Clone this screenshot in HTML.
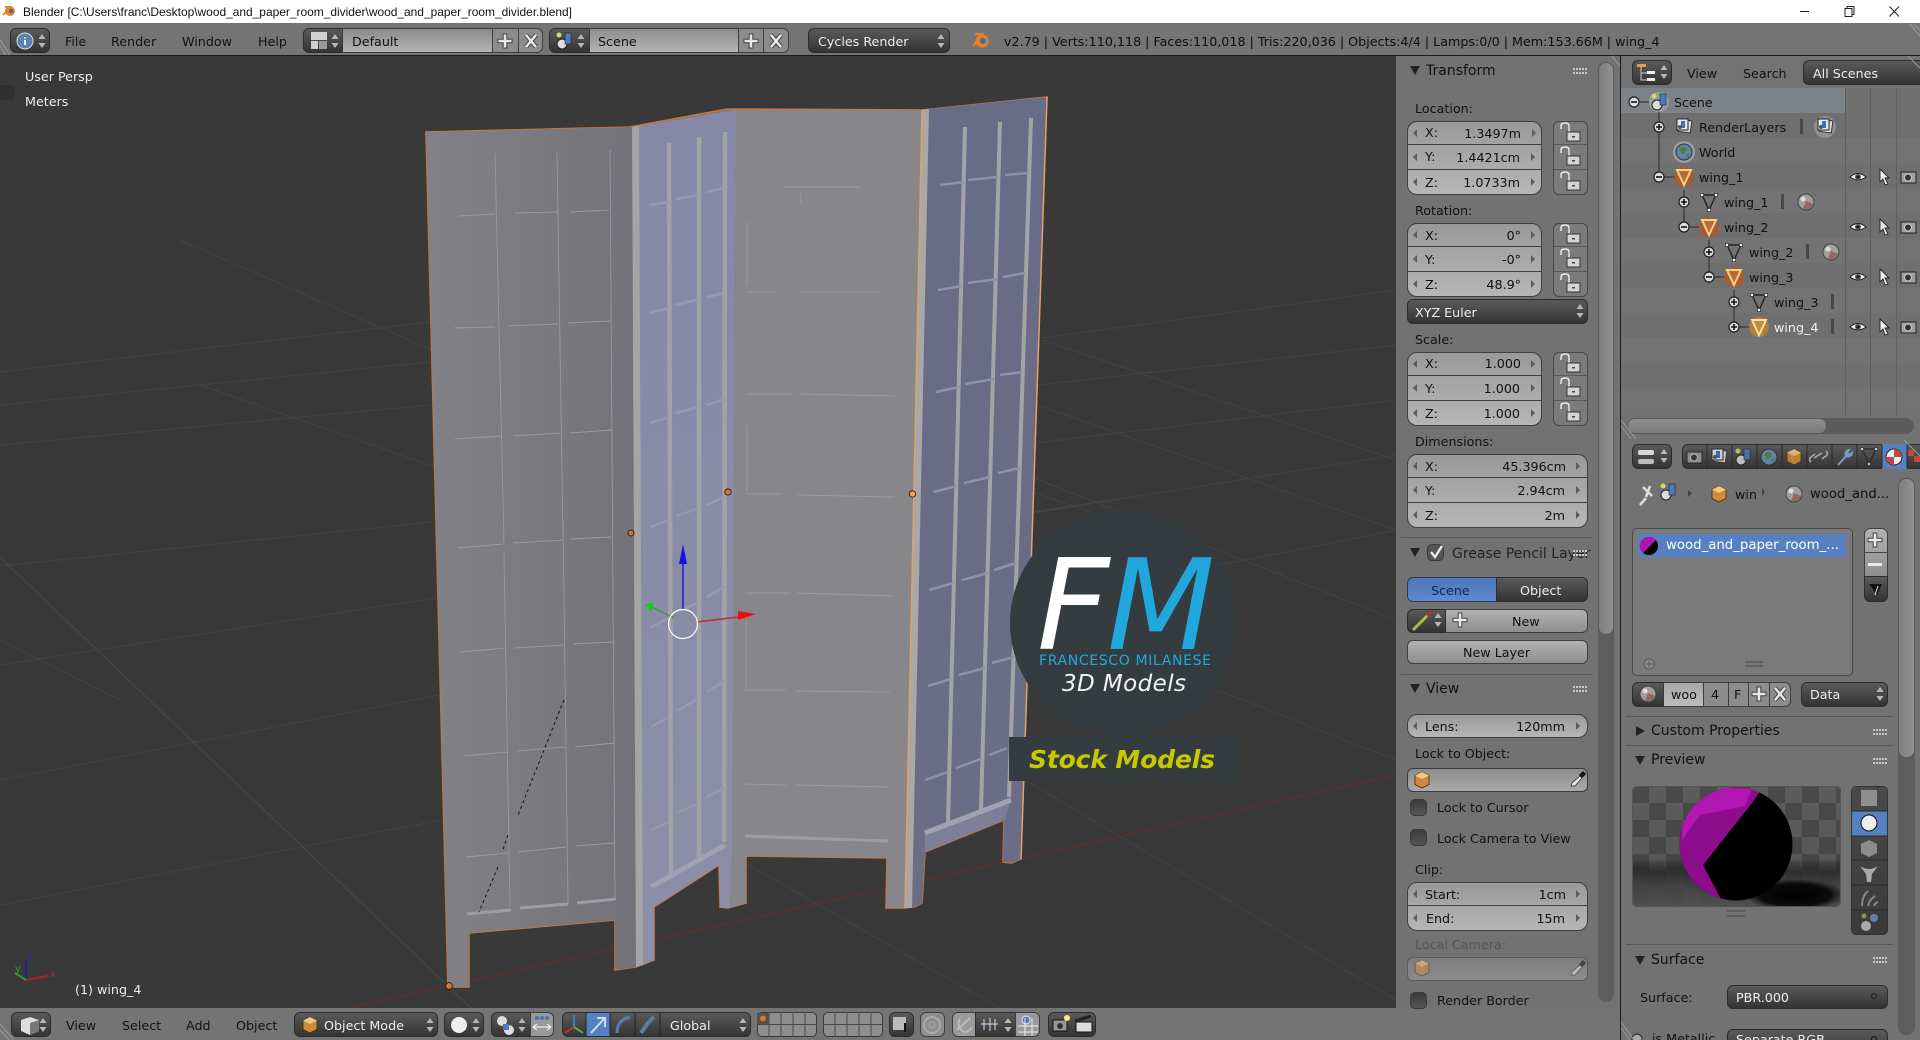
<!DOCTYPE html>
<html><head><meta charset="utf-8"><title>Blender</title>
<style>
html,body{margin:0;padding:0;background:#737373;}
#p{position:relative;width:1920px;height:1040px;overflow:hidden;background:#737373;font-family:"DejaVu Sans","Liberation Sans",sans-serif;font-size:12.7px;color:#111;}
#p div,#p span,#p svg{position:absolute;box-sizing:border-box;}
.t{white-space:nowrap;line-height:16px;height:16px;}
.w{color:#eee;}
.h{font-size:14px;color:#111;}
.dk{background:linear-gradient(#5a5a5a,#343434);border:1px solid #2c2c2c;border-radius:6px;}
.fl{background:linear-gradient(#8e8e8e,#b4b4b4);border:1px solid #3a3a3a;}
.bt{background:linear-gradient(#b2b2b2,#8e8e8e);border:1px solid #3e3e3e;border-radius:6px;}
.grp{background:linear-gradient(#999,#b6b6b6);border:1px solid #3f3f3f;border-radius:10px;}
.sep{background:#5a5a5a;height:1px;}
.lk{background:#7b7b7b;border:1px solid #474747;}
.cb{background:linear-gradient(#3c3c3c,#555);border:1px solid #3a3a3a;border-radius:5px;width:17px;height:17px;}
</style></head><body><div id="p">

<div style="left:0;top:0;width:1920px;height:23px;background:#fff"></div>
<div style="left:0;top:23px;width:1920px;height:32px;background:#747474"></div>
<div style="left:0;top:55px;width:1920px;height:1px;background:#1c1c1c"></div>
<div style="left:0;top:56px;width:1396px;height:952px;background:#393939"></div>
<div style="left:1396px;top:56px;width:224px;height:952px;background:#727272"></div>
<div style="left:0;top:1008px;width:1620px;height:32px;background:#747474"></div>
<div style="left:1620px;top:56px;width:1px;height:984px;background:#1a1a1a"></div>
<div style="left:1621px;top:439px;width:299px;height:1px;background:#1a1a1a"></div>
<div style="left:1621px;top:56px;width:299px;height:32px;background:#737373"></div>
<div style="left:1621px;top:88px;width:299px;height:352px;background:#6f6f6f"></div>
<div style="left:1621px;top:138px;width:299px;height:25px;background:#737373"></div>
<div style="left:1621px;top:188px;width:299px;height:25px;background:#737373"></div>
<div style="left:1621px;top:238px;width:299px;height:25px;background:#737373"></div>
<div style="left:1621px;top:288px;width:299px;height:25px;background:#737373"></div>
<div style="left:1621px;top:338px;width:299px;height:25px;background:#737373"></div>
<div style="left:1621px;top:388px;width:299px;height:27px;background:#737373"></div>
<div style="left:1621px;top:88px;width:224px;height:25px;background:#7c8285"></div>
<div style="left:1845px;top:88px;width:1px;height:327px;background:#5f5f5f"></div>
<div style="left:1870px;top:88px;width:1px;height:327px;background:#5f5f5f"></div>
<div style="left:1896px;top:88px;width:1px;height:327px;background:#5f5f5f"></div>
<div style="left:1621px;top:415px;width:299px;height:24px;background:#727272"></div>
<div style="left:1621px;top:440px;width:299px;height:600px;background:#727272"></div>

<!-- viewport art -->
<svg style="left:0;top:56px" width="1396" height="952" viewBox="0 56 1396 952">
<defs>
<linearGradient id="gl" x1="0" x2="1" y1="0" y2="0"><stop offset="0" stop-color="#828286"/><stop offset="1" stop-color="#727278"/></linearGradient>
<linearGradient id="gm" x1="0" x2="0" y1="0" y2="1"><stop offset="0" stop-color="#87878a"/><stop offset="1" stop-color="#87878b"/></linearGradient>
<linearGradient id="gb" x1="0" x2="0" y1="0" y2="1"><stop offset="0" stop-color="#8589a6"/><stop offset="1" stop-color="#8d8fa8"/></linearGradient>
<linearGradient id="gr" x1="0" x2="0" y1="0" y2="1"><stop offset="0" stop-color="#696c86"/><stop offset="1" stop-color="#6b6d86"/></linearGradient>
</defs>
<g stroke="#444" stroke-width="1" fill="none">
<path d="M0,372 L430,322 M0,405 L430,362 M0,445 L430,405 M0,566 L432,522 M0,665 L435,598 M0,780 L439,695 M0,905 L441,820"/>
<path d="M180,240 L432,350 M200,385 L435,467 M0,640 L120,700"/>
<path d="M1042,338 L1396,290 M1037,385 L1396,345 M1035,443 L1396,400 M1033,513 L1396,455 M1042,340 L1396,460 M1037,405 L1396,530 M1034,478 L1396,620 M1025,780 L1396,1000 M740,860 L1000,1008 M1035,493 L1093,513 M1033,512 L1177,490 M1220,565 L1396,530 M1217,690 L1396,760"/>
</g>
<path d="M349,1008 L1396,775" stroke="#6c2b2b" stroke-width="1.2" fill="none"/>
<path d="M0,557 L471,1008" stroke="#3a543a" stroke-width="1" fill="none"/>

<path d="M426,132 L630,127 L727,109 L922,110 L1047,97 L1021,859 L1011,863 L1003,862 L1004,820 L925,852 L922,903 L914,907 L905,908 L886,908 L887,858 L746,856 L746,903 L728,908 L720,907 L719,865 L654,907 L654,960 L636,967 L615,970 L615,920 L469,933 L469,987 L448,987 Z" fill="#7b7b80" stroke="#c9763c" stroke-width="1.6"/>
<polygon points="426,132 632,127 636,967 615,970 615,920 469,933 469,987 448,987" fill="url(#gl)"/>
<polygon points="639,126 736,110 732,853 730,908 720,907 719,865 654,907 654,960 643,965" fill="url(#gb)"/>
<polygon points="736,110 922,110 905,908 886,908 887,858 746,856 746,903 730,908 732,853" fill="url(#gm)"/>
<polygon points="929,109 1047,97 1021,859 1011,863 1003,862 1004,820 925,852 922,903 914,907 912,908" fill="url(#gr)"/>
<polygon points="632,127 639,126 643,965 636,967" fill="#a5a5a5"/>
<polygon points="922,110 929,109 912,908 905,908" fill="#a8a8a8"/>
<polygon points="925,835 1011,798 1005,820 925,852" fill="#7d7f97"/>
<!-- bars -->
<g fill="none" stroke="#a3a3a6" stroke-width="4.5">
<path d="M669,143 L671,875 M699,137 L699,857 M725,132 L724,842"/>
<path d="M965,127 L948,823 M1000,122 L981,810 M1031,118 L1009,797" stroke-width="4"/>
<path d="M651,887 L725,845 M925,833 L1011,800" stroke="#a0a2b0" stroke-width="5"/>
</g>
<g fill="none" stroke="#9799ae" stroke-width="2.5">
<path d="M649,205L669,202M676,199L699,195M707,192L724,188M650,313L669,308M676,305L699,299M707,297L724,293M650,423L669,417M676,413L699,407M707,405L724,399M651,527L669,520M677,516L699,508M707,505L724,497M651,627L669,618M677,612L699,602M707,597L724,587M651,727L669,717M677,711L699,698M707,692L724,681M651,830L669,822M677,813L699,803M707,797L724,788"/>
<path d="M940,185L964,182M968,180L998,177M1005,175L1029,173M938,290L962,286M968,283L997,279M1003,277L1025,273M936,392L959,387M965,384L994,379M1000,375L1022,372M933,492L957,486M964,483L990,477M998,473L1020,468M929,590L953,583M962,580L988,573M994,570L1016,563M928,686L951,679M959,675L985,668M992,663L1014,657M925,780L948,772M956,768L981,759M989,755L1007,748" stroke="#8f91a8"/>
</g>
<!-- thin lines -->
<g fill="none" stroke="#9a9a9e" stroke-width="0.9">
<path d="M495,153L504,543M504,553L510,908M557,152L563,540M563,520L568,903M610,150L615,897"/>
<path d="M459,216L495,214M515,213L558,212M570,212L609,210M454,328L495,327M507,326L558,324M568,323L611,321M455,439L502,436M513,436L560,433M570,433L612,430M458,548L503,544M513,543L563,540M571,539L611,537M461,652L506,648M515,648L564,645M573,644L614,642M463,756L508,752M517,751L565,747M575,747L615,743M466,857L508,853M518,852L566,847M576,846L615,843"/>
<path d="M784,187L860,187M801,192L801,205M747,222L747,285M746,292L775,292M801,292L880,292M747,394L792,394M799,394L896,396M747,425L747,493M747,494L781,494M798,495L894,497M746,593L790,593M797,593L894,596M746,620L746,690M746,690L786,690M797,691L890,692M745,784L786,785M795,785L889,787"/>
</g>
<path d="M467,914L511,910M520,908L568,904M577,903L616,899M745,836L888,841" stroke="#9c9ca4" stroke-width="3" fill="none"/>
<path d="M564,700L518,815M508,835L503,850M498,867L479,912" stroke="#111" stroke-width="1" stroke-dasharray="3 3" fill="none"/>
<path d="M1047,97 L1021,859 M922,110 L905,908" stroke="#e3a364" stroke-width="1.4" fill="none"/>
<g stroke="#111" stroke-width="0.8"><circle cx="631" cy="533" r="3" fill="#d0703a"/><circle cx="728" cy="492" r="3.2" fill="#e0702c"/><circle cx="912.5" cy="494" r="3.2" fill="#f0a850"/><circle cx="449" cy="986" r="3.4" fill="#d07a30"/></g>
<!-- gizmo -->
<path d="M683,609 L683,560" stroke="#1a1ac8" stroke-width="1.5"/><path d="M683,544 L687,564 L679,564 Z" fill="#1414e0"/>
<path d="M697,622 L739,617" stroke="#c42a2a" stroke-width="1.5"/><path d="M756,614 L738,611 L738,620 Z" fill="#e81010"/>
<path d="M674,618 L652,607" stroke="#30a030" stroke-width="1.5"/><path d="M645,604 L654,603 L651,612 Z" fill="#10d010"/>
<circle cx="683" cy="624" r="14.5" fill="none" stroke="#fff" stroke-width="1.2"/>
<!-- nav axes -->
<path d="M26,980 L26,960" stroke="#2020b0" stroke-width="2"/><path d="M26,980 L48,976" stroke="#b02020" stroke-width="2"/><path d="M26,980 L15,973" stroke="#20a020" stroke-width="2"/>
<text x="27" y="958" font-size="10" fill="#2a2ab0" font-family="DejaVu Sans">z</text>
<text x="50" y="977" font-size="10" fill="#a03030" font-family="DejaVu Sans">x</text>
<text x="15" y="972" font-size="10" fill="#30a030" font-family="DejaVu Sans">y</text>
<!-- logo -->
<circle cx="1123" cy="623" r="113" fill="#353c3f"/>
<rect x="1009" y="737" width="228" height="44" fill="#353c3f"/>
<text x="1037" y="649" font-size="126" font-style="oblique" fill="#fff" font-family="DejaVu Sans">F</text>
<text x="1107" y="649" font-size="126" font-style="oblique" fill="#22a7dd" font-family="DejaVu Sans" textLength="108" lengthAdjust="spacingAndGlyphs">M</text>
<text x="1039" y="665" font-size="14" fill="#22a7dd" font-family="DejaVu Sans" textLength="172">FRANCESCO MILANESE</text>
<text x="1062" y="691" font-size="23" font-style="oblique" fill="#f4f4f4" font-family="DejaVu Sans" textLength="124">3D Models</text>
<text x="1029" y="768" font-size="25" font-style="oblique" font-weight="bold" fill="#c8c800" font-family="DejaVu Sans" textLength="186">Stock Models</text>
</svg>

<!-- title -->
<svg style="left:0;top:0;z-index:5" width="1920" height="24">
<circle cx="10" cy="11" r="5" fill="#e8821e"/><circle cx="11" cy="11" r="2.2" fill="#3a6ea8"/><path d="M3,15 L9,9 M5,7 L11,7" stroke="#e8821e" stroke-width="2"/>
<text x="23" y="16" font-size="12" fill="#111" font-family="Liberation Sans" textLength="549" lengthAdjust="spacingAndGlyphs">Blender [C:\Users\franc\Desktop\wood_and_paper_room_divider\wood_and_paper_room_divider.blend]</text>
<path d="M1800,11.5 H1809" stroke="#222"/>
<path d="M1845,8.5 H1852 V16.5 H1845 Z M1847,8.5 V6.5 H1854 V14.5 H1852" fill="none" stroke="#222"/>
<path d="M1889.5,6.5 L1899,16.5 M1899,6.5 L1889.5,16.5" stroke="#222"/>
</svg>

<!-- top header buttons -->
<div class="dk" style="left:10px;top:28px;width:40px;height:25px"></div>
<span class="t" style="left:65px;top:34px">File</span>
<span class="t" style="left:111px;top:34px">Render</span>
<span class="t" style="left:182px;top:34px">Window</span>
<span class="t" style="left:258px;top:34px">Help</span>
<div class="dk" style="left:303px;top:28px;width:40px;height:25px;border-radius:6px 0 0 6px"></div>
<div class="fl" style="left:342px;top:28px;width:151px;height:25px;background:linear-gradient(#8a8a8a,#b4b4b4)"></div>
<div class="bt" style="left:492px;top:28px;width:27px;height:25px;border-radius:0;background:#8c8c8c"></div>
<div class="bt" style="left:518px;top:28px;width:25px;height:25px;border-radius:0 6px 6px 0;background:#8c8c8c"></div>
<span class="t" style="left:352px;top:34px">Default</span>
<div class="dk" style="left:549px;top:28px;width:41px;height:25px;border-radius:6px 0 0 6px"></div>
<div class="fl" style="left:589px;top:28px;width:150px;height:25px"></div>
<div class="bt" style="left:738px;top:28px;width:26px;height:25px;border-radius:0;background:#8c8c8c"></div>
<div class="bt" style="left:763px;top:28px;width:26px;height:25px;border-radius:0 6px 6px 0;background:#8c8c8c"></div>
<span class="t" style="left:598px;top:34px">Scene</span>
<div class="dk" style="left:808px;top:28px;width:142px;height:25px"></div>
<span class="t w" style="left:818px;top:34px">Cycles Render</span>
<span class="t" style="left:1004px;top:34px;color:#0d0d0d">v2.79 | Verts:110,118 | Faces:110,018 | Tris:220,036 | Objects:4/4 | Lamps:0/0 | Mem:153.66M | wing_4</span>
<span class="t w" style="left:25px;top:69px">User Persp</span>
<span class="t w" style="left:25px;top:94px">Meters</span>
<div style="left:0;top:85px;width:15px;height:15px;background:#303030;border-radius:0 5px 5px 0"></div>
<span class="t w" style="left:75px;top:982px">(1) wing_4</span>

<!-- N panel -->
<div style="left:1598px;top:62px;width:16px;height:940px;background:#5e5e5e;border-radius:8px"></div>
<div style="left:1598px;top:62px;width:16px;height:573px;background:linear-gradient(90deg,#7e7e7e,#929292);border:1px solid #5a5a5a;border-radius:8px"></div>
<span class="t h" style="left:1426px;top:63px">Transform</span>
<span class="t" style="left:1415px;top:101px">Location:</span>
<div class="grp" style="left:1407px;top:121px;width:135px;height:74px"></div>
<div class="sep" style="left:1408px;top:144px;width:133px;background:#3f3f3f"></div><div class="sep" style="left:1408px;top:169px;width:133px;background:#3f3f3f"></div>
<span class="t" style="left:1425px;top:125px">X:</span><span class="t" style="right:399px;top:126px">1.3497m</span>
<span class="t" style="left:1425px;top:149px">Y:</span><span class="t" style="right:400px;top:150px">1.4421cm</span>
<span class="t" style="left:1425px;top:175px">Z:</span><span class="t" style="right:400px;top:175px">1.0733m</span>
<span class="t" style="left:1415px;top:203px">Rotation:</span>
<div class="grp" style="left:1407px;top:223px;width:135px;height:74px"></div>
<div class="sep" style="left:1408px;top:246px;width:133px;background:#3f3f3f"></div><div class="sep" style="left:1408px;top:271px;width:133px;background:#3f3f3f"></div>
<span class="t" style="left:1425px;top:228px">X:</span><span class="t" style="right:399px;top:228px">0°</span>
<span class="t" style="left:1425px;top:252px">Y:</span><span class="t" style="right:399px;top:252px">-0°</span>
<span class="t" style="left:1425px;top:277px">Z:</span><span class="t" style="right:399px;top:277px">48.9°</span>
<div class="dk" style="left:1407px;top:299px;width:181px;height:25px"></div>
<span class="t w" style="left:1415px;top:305px">XYZ Euler</span>
<span class="t" style="left:1415px;top:332px">Scale:</span>
<div class="grp" style="left:1407px;top:352px;width:135px;height:74px"></div>
<div class="sep" style="left:1408px;top:375px;width:133px;background:#3f3f3f"></div><div class="sep" style="left:1408px;top:400px;width:133px;background:#3f3f3f"></div>
<span class="t" style="left:1425px;top:356px">X:</span><span class="t" style="right:399px;top:356px">1.000</span>
<span class="t" style="left:1425px;top:381px">Y:</span><span class="t" style="right:400px;top:381px">1.000</span>
<span class="t" style="left:1425px;top:406px">Z:</span><span class="t" style="right:400px;top:406px">1.000</span>
<span class="t" style="left:1415px;top:434px">Dimensions:</span>
<div class="grp" style="left:1407px;top:454px;width:181px;height:74px"></div>
<div class="sep" style="left:1408px;top:477px;width:179px;background:#3f3f3f"></div><div class="sep" style="left:1408px;top:502px;width:179px;background:#3f3f3f"></div>
<span class="t" style="left:1425px;top:459px">X:</span><span class="t" style="right:354px;top:459px">45.396cm</span>
<span class="t" style="left:1425px;top:483px">Y:</span><span class="t" style="right:355px;top:483px">2.94cm</span>
<span class="t" style="left:1425px;top:508px">Z:</span><span class="t" style="right:355px;top:508px">2m</span>
<div class="lk" style="left:1553px;top:121px;width:35px;height:74px;border-radius:6px"></div>
<div class="sep" style="left:1554px;top:144px;width:33px"></div><div class="sep" style="left:1554px;top:169px;width:33px"></div>
<div class="lk" style="left:1553px;top:223px;width:35px;height:74px;border-radius:6px"></div>
<div class="sep" style="left:1554px;top:246px;width:33px"></div><div class="sep" style="left:1554px;top:271px;width:33px"></div>
<div class="lk" style="left:1553px;top:352px;width:35px;height:74px;border-radius:6px"></div>
<div class="sep" style="left:1554px;top:375px;width:33px"></div><div class="sep" style="left:1554px;top:400px;width:33px"></div>
<div class="sep" style="left:1401px;top:537px;width:192px"></div>
<div class="cb" style="left:1427px;top:544px;background:#555"></div>
<span class="t" style="left:1452px;top:546px;font-size:14px;color:#222">Grease Pencil Layer</span>
<div style="left:1407px;top:577px;width:90px;height:25px;background:linear-gradient(#4c76b8,#5e8ad0);border:1px solid #2c3c58;border-radius:6px 0 0 6px"></div>
<div style="left:1496px;top:577px;width:92px;height:25px;background:linear-gradient(#5a5a5a,#343434);border:1px solid #2c2c2c;border-radius:0 6px 6px 0"></div>
<span class="t" style="left:1431px;top:583px;color:#10264c">Scene</span><span class="t w" style="left:1520px;top:583px">Object</span>
<div class="bt" style="left:1407px;top:609px;width:181px;height:24px"></div>
<div class="dk" style="left:1407px;top:609px;width:39px;height:24px;border-radius:6px 0 0 6px"></div>
<span class="t" style="left:1512px;top:614px">New</span>
<div class="bt" style="left:1407px;top:640px;width:181px;height:24px"></div>
<span class="t" style="left:1463px;top:645px">New Layer</span>
<div class="sep" style="left:1401px;top:674px;width:192px"></div>
<span class="t h" style="left:1426px;top:681px">View</span>
<div class="grp" style="left:1407px;top:714px;width:181px;height:24px"></div>
<span class="t" style="left:1425px;top:719px">Lens:</span><span class="t" style="right:355px;top:719px">120mm</span>
<span class="t" style="left:1415px;top:746px">Lock to Object:</span>
<div class="fl" style="left:1407px;top:768px;width:181px;height:24px;border-radius:6px;background:linear-gradient(#8c8c8c,#aaa)"></div>
<div class="cb" style="left:1410px;top:799px"></div>
<span class="t" style="left:1437px;top:800px">Lock to Cursor</span>
<div class="cb" style="left:1410px;top:829px"></div>
<span class="t" style="left:1437px;top:831px">Lock Camera to View</span>
<span class="t" style="left:1415px;top:862px">Clip:</span>
<div class="grp" style="left:1407px;top:882px;width:181px;height:49px"></div>
<div class="sep" style="left:1408px;top:905px;width:179px;background:#3f3f3f"></div>
<span class="t" style="left:1425px;top:887px">Start:</span><span class="t" style="right:354px;top:887px">1cm</span>
<span class="t" style="left:1426px;top:911px">End:</span><span class="t" style="right:355px;top:911px">15m</span>
<span class="t" style="left:1415px;top:937px;color:#555">Local Camera:</span>
<div class="fl" style="left:1407px;top:957px;width:181px;height:24px;border-radius:6px;background:linear-gradient(#7e7e7e,#8c8c8c);border-color:#5a5a5a"></div>
<div class="cb" style="left:1410px;top:992px"></div>
<span class="t" style="left:1437px;top:993px">Render Border</span>

<!-- outliner -->
<div class="dk" style="left:1632px;top:60px;width:40px;height:25px"></div>
<span class="t" style="left:1687px;top:66px">View</span><span class="t" style="left:1743px;top:66px">Search</span>
<div class="dk" style="left:1803px;top:60px;width:125px;height:25px"></div>
<span class="t w" style="left:1813px;top:66px">All Scenes</span>
<span class="t" style="left:1674px;top:95px">Scene</span>
<span class="t" style="left:1699px;top:120px">RenderLayers</span>
<span class="t" style="left:1699px;top:145px">World</span>
<span class="t" style="left:1699px;top:170px">wing_1</span>
<span class="t" style="left:1724px;top:195px">wing_1</span>
<span class="t" style="left:1724px;top:220px">wing_2</span>
<span class="t" style="left:1749px;top:245px">wing_2</span>
<span class="t" style="left:1749px;top:270px">wing_3</span>
<span class="t" style="left:1774px;top:295px">wing_3</span>
<span class="t" style="left:1774px;top:320px;color:#f0f0f0">wing_4</span>
<div style="left:1627px;top:418px;width:287px;height:16px;background:#5c5c5c;border-radius:8px"></div>
<div style="left:1627px;top:418px;width:200px;height:16px;background:linear-gradient(#8e8e8e,#7a7a7a);border:1px solid #5a5a5a;border-radius:8px"></div>

<!-- properties -->
<div class="dk" style="left:1632px;top:444px;width:40px;height:25px"></div>
<div class="dk" style="left:1682px;top:444px;width:250px;height:25px;border-radius:6px"></div>
<div style="left:1882px;top:444px;width:25px;height:25px;background:#5680c2"></div>
<span class="t" style="left:1735px;top:487px">win</span>
<span class="t" style="left:1810px;top:487px;font-size:13.2px">wood_and...</span>
<div style="left:1898px;top:478px;width:17px;height:557px;background:#5e5e5e;border-radius:8px"></div>
<div style="left:1898px;top:478px;width:17px;height:280px;background:linear-gradient(90deg,#7e7e7e,#929292);border:1px solid #5a5a5a;border-radius:8px"></div>
<div style="left:1632px;top:528px;width:221px;height:148px;background:#7a7a7a;border:1px solid #484848;border-radius:5px"></div>
<div style="left:1638px;top:534px;width:208px;height:23px;background:#5680c2"></div>
<span class="t" style="left:1666px;top:538px;color:#fff;font-size:13.3px">wood_and_paper_room_...</span>
<div class="bt" style="left:1864px;top:528px;width:24px;height:49px;border-radius:6px 6px 0 0"></div>
<div class="sep" style="left:1865px;top:552px;width:22px;background:#444"></div>
<div class="dk" style="left:1864px;top:576px;width:24px;height:26px;border-radius:0 0 6px 6px"></div>
<div class="dk" style="left:1632px;top:682px;width:32px;height:25px;border-radius:6px 0 0 6px"></div>
<div class="fl" style="left:1663px;top:682px;width:41px;height:25px;background:linear-gradient(#a8a8a8,#bcbcbc)"></div>
<div class="bt" style="left:1703px;top:682px;width:26px;height:25px;border-radius:0;background:#8c8c8c"></div>
<div class="bt" style="left:1728px;top:682px;width:21px;height:25px;border-radius:0;background:#8c8c8c"></div>
<div class="bt" style="left:1748px;top:682px;width:22px;height:25px;border-radius:0;background:#8c8c8c"></div>
<div class="bt" style="left:1769px;top:682px;width:22px;height:25px;border-radius:0 6px 6px 0;background:#8c8c8c"></div>
<span class="t" style="left:1671px;top:687px">woo</span><span class="t" style="left:1711px;top:687px">4</span><span class="t" style="left:1734px;top:687px">F</span>
<div class="dk" style="left:1801px;top:682px;width:87px;height:25px"></div>
<span class="t w" style="left:1810px;top:687px">Data</span>
<div class="sep" style="left:1626px;top:716px;width:267px"></div>
<span class="t h" style="left:1651px;top:723px">Custom Properties</span>
<div class="sep" style="left:1626px;top:745px;width:267px"></div>
<span class="t h" style="left:1651px;top:752px">Preview</span>
<div class="sep" style="left:1626px;top:944px;width:267px"></div>
<span class="t h" style="left:1651px;top:952px">Surface</span>
<span class="t" style="left:1640px;top:990px">Surface:</span>
<div class="dk" style="left:1727px;top:985px;width:161px;height:24px"></div>
<span class="t w" style="left:1736px;top:990px">PBR.000</span>
<span class="t" style="left:1652px;top:1031px">is Metallic</span>
<div class="dk" style="left:1727px;top:1029px;width:161px;height:30px"></div>
<span class="t w" style="left:1736px;top:1032px">Separate RGB</span>
<div style="left:1851px;top:786px;width:37px;height:149px;background:linear-gradient(#4a4a4a,#3a3a3a);border:1px solid #333;border-radius:5px"></div>
<div style="left:1852px;top:811px;width:35px;height:25px;background:#5680c2"></div>

<!-- bottom header -->
<div class="dk" style="left:11px;top:1012px;width:40px;height:25px"></div>
<span class="t" style="left:66px;top:1018px">View</span><span class="t" style="left:122px;top:1018px">Select</span><span class="t" style="left:186px;top:1018px">Add</span><span class="t" style="left:236px;top:1018px">Object</span>
<div class="dk" style="left:294px;top:1012px;width:144px;height:25px"></div>
<span class="t w" style="left:324px;top:1018px">Object Mode</span>
<div class="dk" style="left:444px;top:1012px;width:40px;height:25px"></div>
<div class="dk" style="left:491px;top:1012px;width:40px;height:25px;border-radius:6px 0 0 6px"></div>
<div class="bt" style="left:530px;top:1012px;width:24px;height:25px;border-radius:0 6px 6px 0;background:#999"></div>
<div class="dk" style="left:562px;top:1012px;width:189px;height:25px"></div>
<div style="left:586px;top:1013px;width:24px;height:23px;background:#5680c2"></div>
<span class="t w" style="left:670px;top:1018px">Global</span>
<div class="fl" style="left:757px;top:1012px;width:60px;height:25px;background:#8e8e8e;border-radius:5px"></div>
<div class="fl" style="left:823px;top:1012px;width:60px;height:25px;background:#8e8e8e;border-radius:5px"></div>
<div class="dk" style="left:889px;top:1012px;width:25px;height:25px"></div>
<div class="bt" style="left:920px;top:1012px;width:25px;height:25px;background:#8e8e8e"></div>
<div class="bt" style="left:952px;top:1012px;width:24px;height:25px;border-radius:6px 0 0 6px;background:#9a9a9a"></div>
<div class="dk" style="left:975px;top:1012px;width:41px;height:25px;border-radius:0"></div>
<div class="bt" style="left:1015px;top:1012px;width:25px;height:25px;border-radius:0 6px 6px 0;background:#9a9a9a"></div>
<div class="dk" style="left:1048px;top:1012px;width:48px;height:25px"></div>

<!-- icons overlay -->
<svg style="left:0;top:0;z-index:4" width="1920" height="1040" viewBox="0 0 1920 1040">
<defs>
<g id="lock"><path d="M-10,-5 V-8 Q-10,-11 -6,-11 Q-2,-11 -2,-8 V-2" fill="none" stroke="#eee" stroke-width="1.4"/><rect x="-4" y="-2" width="13" height="9" fill="#d4d4d4" stroke="#333"/><rect x="1" y="2" width="3" height="1.5" fill="#444"/></g>
<path id="ar" d="M0,-4 L-4,0 L0,4 Z" fill="#5c5c5c"/>
<path id="br" d="M0,-4 L4,0 L0,4 Z" fill="#5c5c5c"/>
<g id="ud"><path d="M0,-7 L-3.5,-2 H3.5 Z M0,7 L-3.5,2 H3.5 Z" fill="#b8b8b8"/></g>
<path id="tri" d="M-5,-4 H5 L0,5 Z" fill="#222"/>
<path id="grip" d="M0,0h2v2h-2zM3,0h2v2h-2zM6,0h2v2h-2zM9,0h2v2h-2zM12,0h2v2h-2zM0,4h2v2h-2zM3,4h2v2h-2zM6,4h2v2h-2zM9,4h2v2h-2zM12,4h2v2h-2z" fill="#c8c8c8"/>
<g id="plusb"><path d="M-1.8,-7 H1.8 V-1.8 H7 V1.8 H1.8 V7 H-1.8 V1.8 H-7 V-1.8 H-1.8 Z" fill="#e8e8e8" stroke="#444" stroke-width="1"/></g>
<g id="xb"><path d="M-5,-6 L5,6 M5,-6 L-5,6" stroke="#444" stroke-width="4.5"/><path d="M-5,-6 L5,6 M5,-6 L-5,6" stroke="#e8e8e8" stroke-width="2.5"/></g>
<g id="sc"><circle cx="-3" cy="3" r="5" fill="#ddd" stroke="#222"/><rect x="0" y="-8" width="6" height="11" fill="#4a7ac0" stroke="#222" stroke-width=".6"/><circle cx="-6" cy="-6" r="2.5" fill="#dcd864"/></g>
<g id="cube"><path d="M0,-8 L7,-4.5 V4.5 L0,8 L-7,4.5 V-4.5 Z" fill="#d18a3c" stroke="#3e2a10" stroke-width=".8"/><path d="M-7,-4.5 L0,-1 L7,-4.5 L0,-8 Z" fill="#f4c68a"/></g>
<g id="oT"><circle r="10" fill="#a85a30"/><path d="M-7,-7 H7 L0,8 Z" fill="#b86c34" stroke="#f6d08a" stroke-width="2"/></g>
<g id="oTa"><circle r="10" fill="#b08040"/><path d="M-7,-7 H7 L0,8 Z" fill="#c08a40" stroke="#ffe0a0" stroke-width="2"/></g>
<g id="mesh"><path d="M-7,-7 H7 L0,8 Z" fill="none" stroke="#222" stroke-width="1.4"/><rect x="-8.5" y="-8.5" width="3" height="3" fill="#fff" stroke="#111" stroke-width=".6"/><rect x="5.5" y="-8.5" width="3" height="3" fill="#fff" stroke="#111" stroke-width=".6"/><rect x="-1.5" y="6.5" width="3" height="3" fill="#fff" stroke="#111" stroke-width=".6"/></g>
<g id="eye"><path d="M-8,0 Q0,-7 8,0 Q0,6 -8,0 Z" fill="#f0f0f0" stroke="#222"/><circle r="3" fill="#555"/><circle r="1.4" fill="#111"/></g>
<path id="cur" d="M-4,-8 L5,1 L1,1 L4,7 L1,8 L-1,2 L-4,5 Z" fill="#f0f0f0" stroke="#222" stroke-width=".9"/>
<g id="cam"><rect x="-7" y="-5" width="15" height="11" fill="#a0a0a0" stroke="#222"/><circle cy="0.5" r="3.5" fill="#333" stroke="#ccc"/></g>
<g id="mat"><circle r="8" fill="#a0a0a0" stroke="#444"/><path d="M0,-1 L7,2 A8,8 0 0 1 -3,7 Z" fill="#8e6a62"/><circle cx="-3" cy="-3" r="2.5" fill="#ddd"/></g>
<g id="ex"><circle r="5" fill="#ddd" stroke="#1c1c1c" stroke-width="1.2"/><path d="M-3,0 H3 M0,-3 V3" stroke="#111" stroke-width="1.6"/></g>
<g id="co"><circle r="5" fill="#ddd" stroke="#1c1c1c" stroke-width="1.2"/><path d="M-3,0 H3" stroke="#111" stroke-width="1.6"/></g>
<g id="picker"><path d="M-7,7 L-6,4 L2,-3 L4,-1 L-3,7 Z" fill="#e8e8e8" stroke="#222" stroke-width=".7"/><path d="M1,-4 L5,-8 L8,-5 L4,-1 Z" fill="#111"/></g>
<g id="rl"><rect x="-5" y="-7" width="12" height="12" fill="#ddd" stroke="#333" transform="rotate(8)"/><rect x="-7" y="-8" width="11" height="11" fill="#e8e8e8" stroke="#222"/><rect x="-3" y="-6" width="4" height="7" fill="#3c70c0"/><circle cx="-4" cy="0" r="2" fill="#555"/></g>
<g id="globe"><circle r="8" fill="#5c86a8" stroke="#333"/><path d="M-5,-3 Q0,-7 3,-3 Q2,2 -2,2 Z M2,3 L6,1 L4,6 Z" fill="#567a40"/></g>
</defs>

<!-- N-panel arrows -->
<use href="#ar" x="1417" y="133"/><use href="#br" x="1532" y="133"/>
<use href="#ar" x="1417" y="157"/><use href="#br" x="1531" y="157"/><use href="#ar" x="1417" y="182"/><use href="#br" x="1531" y="182"/>
<use href="#ar" x="1417" y="235"/><use href="#br" x="1531" y="235"/><use href="#ar" x="1417" y="259"/><use href="#br" x="1531" y="259"/><use href="#ar" x="1417" y="284"/><use href="#br" x="1531" y="284"/>
<use href="#ar" x="1417" y="364"/><use href="#br" x="1531" y="364"/><use href="#ar" x="1417" y="388"/><use href="#br" x="1531" y="388"/><use href="#ar" x="1417" y="413"/><use href="#br" x="1531" y="413"/>
<use href="#ar" x="1417" y="466"/><use href="#br" x="1576" y="466"/><use href="#ar" x="1417" y="490"/><use href="#br" x="1576" y="490"/><use href="#ar" x="1417" y="515"/><use href="#br" x="1576" y="515"/>
<use href="#ar" x="1417" y="726"/><use href="#br" x="1576" y="726"/><use href="#ar" x="1417" y="894"/><use href="#br" x="1576" y="894"/><use href="#ar" x="1417" y="918"/><use href="#br" x="1576" y="918"/>
<use href="#lock" x="1571" y="134"/><use href="#lock" x="1571" y="158"/><use href="#lock" x="1571" y="183"/>
<use href="#lock" x="1571" y="236"/><use href="#lock" x="1571" y="260"/><use href="#lock" x="1571" y="285"/>
<use href="#lock" x="1571" y="365"/><use href="#lock" x="1571" y="389"/><use href="#lock" x="1571" y="414"/>
<use href="#ud" x="1580" y="311"/>
<use href="#tri" x="1415" y="70"/><use href="#tri" x="1415" y="552"/><use href="#tri" x="1415" y="688"/>
<use href="#grip" x="1573" y="68"/><use href="#grip" x="1573" y="686"/><use href="#grip" x="1573" y="550"/>
<path d="M1431,552 L1435,557 L1442,546" fill="none" stroke="#f0f0f0" stroke-width="2.4"/>
<path d="M1413,630 L1428,615" stroke="#a8c040" stroke-width="3"/><path d="M1427,616 L1431,612" stroke="#c03030" stroke-width="3"/>
<use href="#ud" x="1438" y="620"/>
<use href="#plusb" x="1460" y="620"/>
<use href="#cube" x="1422" y="780"/><use href="#picker" x="1578" y="779"/>
<g opacity=".55"><use href="#cube" x="1422" y="968"/><use href="#picker" x="1578" y="968"/></g>

<!-- top header -->
<circle cx="25" cy="41" r="8" fill="#5a80b8" stroke="#ddd"/><path d="M25,37 V38.5 M25,40 V45" stroke="#fff" stroke-width="2"/>
<use href="#ud" x="42" y="41"/>
<rect x="311" y="32" width="16" height="8" fill="#d0d0d0"/><rect x="311" y="41" width="7" height="8" fill="#d0d0d0"/><rect x="319" y="41" width="8" height="8" fill="#999"/>
<use href="#ud" x="335" y="41"/><use href="#plusb" x="505" y="41"/><use href="#xb" x="531" y="41"/>
<use href="#sc" x="565" y="41"/><use href="#ud" x="581" y="41"/><use href="#plusb" x="751" y="41"/><use href="#xb" x="776" y="41"/>
<use href="#ud" x="941" y="41"/>
<circle cx="982" cy="41" r="6.5" fill="#e8821e"/><circle cx="983" cy="41" r="3" fill="#3a6ea8"/><path d="M973,46 L980,37 M975,34 L984,34" stroke="#e8821e" stroke-width="2.2"/>
<!-- outliner -->
<rect x="1637" y="64" width="9" height="3" fill="#e0a040"/><path d="M1641,67 V80 H1647 M1641,73 H1647" stroke="#ccc" fill="none"/><rect x="1647" y="71" width="8" height="3" fill="#eee"/><rect x="1647" y="78" width="8" height="3" fill="#eee"/>
<use href="#ud" x="1664" y="72"/>
<g stroke="#2a2a2a" fill="none"><path d="M1639,102 H1650 M1659,108 V177 M1659,177 H1675 M1684,190 V227 M1684,227 H1700 M1709,240 V277 M1709,277 H1725 M1734,290 V327 M1734,327 H1750"/></g>
<circle cx="1659" cy="102" r="10" fill="#a0a6a8" opacity=".8"/><circle cx="1684" cy="152" r="11" fill="#a0a8b8" opacity=".8"/>
<use href="#co" x="1634" y="102"/><use href="#ex" x="1659" y="127"/><use href="#co" x="1659" y="177"/><use href="#ex" x="1684" y="202"/><use href="#co" x="1684" y="227"/><use href="#ex" x="1709" y="252"/><use href="#co" x="1709" y="277"/><use href="#ex" x="1734" y="302"/><use href="#ex" x="1734" y="327"/>
<use href="#sc" x="1660" y="102"/><use href="#rl" x="1684" y="127"/><use href="#globe" x="1684" y="152"/>
<use href="#oT" x="1684" y="177"/><use href="#mesh" x="1709" y="202"/><use href="#oT" x="1709" y="227"/><use href="#mesh" x="1734" y="252"/><use href="#oT" x="1734" y="277"/><use href="#mesh" x="1759" y="302"/><use href="#oTa" x="1759" y="327"/>
<g fill="#484848"><rect x="1800" y="119" width="3" height="15"/><rect x="1781" y="194" width="3" height="15"/><rect x="1806" y="244" width="3" height="15"/><rect x="1831" y="294" width="3" height="15"/><rect x="1831" y="319" width="3" height="15"/></g>
<circle cx="1825" cy="127" r="11" fill="#8c9094"/><use href="#rl" x="1825" y="127"/>
<use href="#mat" x="1806" y="202"/><use href="#mat" x="1831" y="252"/>
<use href="#eye" x="1858" y="177"/><use href="#cur" x="1884" y="177"/><use href="#cam" x="1908" y="177"/>
<use href="#eye" x="1858" y="227"/><use href="#cur" x="1884" y="227"/><use href="#cam" x="1908" y="227"/>
<use href="#eye" x="1858" y="277"/><use href="#cur" x="1884" y="277"/><use href="#cam" x="1908" y="277"/>
<use href="#eye" x="1858" y="327"/><use href="#cur" x="1884" y="327"/><use href="#cam" x="1908" y="327"/>
<!-- prop header -->
<rect x="1638" y="450" width="16" height="5" rx="2" fill="#d8d8d8"/><rect x="1638" y="459" width="16" height="5" rx="2" fill="#bbb"/><use href="#ud" x="1664" y="456"/>
<g stroke="#2a2a2a"><path d="M1707,445V468M1732,445V468M1757,445V468M1782,445V468M1807,445V468M1832,445V468M1857,445V468M1882,445V468M1907,445V468"/></g>
<use href="#cam" x="1694" y="457" opacity=".8"/><use href="#rl" x="1719" y="457" opacity=".85"/><use href="#sc" x="1744" y="457" opacity=".8"/><use href="#globe" x="1769" y="457"/><use href="#cube" x="1794" y="457" opacity=".85"/>
<path d="M1811,462 a3,3 0 0 1 0,-5 l4,-3 M1826,451 a3,3 0 0 1 0,5 l-4,3 M1814,458 l8,-5" stroke="#a8aeb0" stroke-width="1.6" fill="none"/>
<path d="M1838,465 L1848,454 M1846,456 a4,4 0 0 1 3,-6 l-2,3 l2,2 l3,-2 a4,4 0 0 1 -6,3" stroke="#7a9cc8" stroke-width="2" fill="none"/><use href="#mesh" x="1869" y="456" opacity=".7"/>
<circle cx="1894" cy="457" r="8" fill="#eee" stroke="#222"/><path d="M1894,449 A8,8 0 0 1 1902,457 H1894 Z M1894,465 A8,8 0 0 1 1886,457 H1894 Z" fill="#c04a3a"/>
<rect x="1908" y="450" width="6" height="6" fill="#c04a3a"/><rect x="1914" y="456" width="6" height="6" fill="#c04a3a"/>
<!-- breadcrumb -->
<path d="M1640,505 L1646,498 M1643,487 L1652,496 M1646,497 L1650,486" stroke="#ddd" stroke-width="2.5"/>
<use href="#sc" x="1669" y="492"/><path d="M1688,490 l4,3.5 l-4,3.5 Z" fill="#444"/><use href="#cube" x="1719" y="494"/><path d="M1762,488 l3,4 l-3,4 Z" fill="#444"/><use href="#mat" x="1794" y="494"/>
<!-- material list -->
<circle cx="1649" cy="546" r="9" fill="#000"/><path d="M1649,537 A9,9 0 0 0 1643,553 L1656,540 A9,9 0 0 0 1649,537 Z" fill="#b014b0"/>
<circle cx="1649" cy="664" r="5" fill="#8a8a8a" stroke="#5a5a5a"/><path d="M1646,664 H1652 M1649,661 V667" stroke="#5a5a5a"/>
<path d="M1745,662 H1763 M1745,666 H1763" stroke="#444"/>
<use href="#plusb" x="1875" y="540"/><rect x="1868" y="563" width="14" height="3" fill="#e8e8e8"/>
<path d="M1869,584 H1882 L1877,595 Z" fill="#111"/><path d="M1878,586 L1875,595" stroke="#eee"/>
<use href="#mat" x="1648" y="694"/><use href="#plusb" x="1759" y="694"/><use href="#xb" x="1780" y="694"/>
<use href="#ud" x="1880" y="694"/>
<path d="M1636,726 l9,5 l-9,5 Z" fill="#222"/><use href="#tri" x="1640" y="760"/><use href="#tri" x="1640" y="960"/>
<use href="#grip" x="1873" y="729"/><use href="#grip" x="1873" y="758"/><use href="#grip" x="1873" y="957"/>
<circle cx="1874" cy="996" r="2.5" fill="none" stroke="#222" stroke-width="1.2"/>
<circle cx="1637" cy="1039" r="5" fill="#aaa" stroke="#222"/>
<circle cx="1874" cy="1039" r="2.5" fill="none" stroke="#222" stroke-width="1.2"/>
<!-- preview -->
<defs><pattern id="ck" x="1632" y="786" width="34" height="34" patternUnits="userSpaceOnUse"><rect width="34" height="34" fill="#4a4a4a"/><rect x="0" y="17" width="17" height="17" fill="#5c5c5c"/><rect x="17" y="0" width="17" height="17" fill="#5c5c5c"/></pattern>
<linearGradient id="fl" x1="0" x2="0" y1="0" y2="1"><stop offset="0" stop-color="#000" stop-opacity="0"/><stop offset=".6" stop-color="#000" stop-opacity=".05"/><stop offset=".72" stop-color="#2a2a2a" stop-opacity=".85"/><stop offset=".8" stop-color="#3c3c3c" stop-opacity=".9"/><stop offset="1" stop-color="#505050" stop-opacity=".9"/></linearGradient>
<radialGradient id="shd" cx="0.5" cy="0.5" r="0.5"><stop offset="0" stop-color="#000"/><stop offset=".7" stop-color="#000" stop-opacity=".85"/><stop offset="1" stop-color="#000" stop-opacity="0"/></radialGradient>
<clipPath id="sph"><circle cx="1736" cy="844" r="56.500"/></clipPath><clipPath id="pv"><rect x="1632" y="786" width="209" height="121" rx="5"/></clipPath></defs>
<g clip-path="url(#pv)">
<rect x="1632" y="786" width="209" height="121" fill="url(#ck)"/><rect x="1632" y="786" width="209" height="121" fill="url(#fl)"/>
<ellipse cx="1795" cy="895" rx="50" ry="16" fill="url(#shd)"/>
<circle cx="1736" cy="844" r="56.500" fill="#000"/>
<g clip-path="url(#sph)"><polygon points="1670,780 1768,780 1752,803 1703,865 1723,903 1670,903" fill="#8c0e8c"/><polygon points="1695,786 1752,789 1745,806 1700,815 1682,840 1682,815" fill="#b416b4"/></g>
</g>
<rect x="1632.500" y="786.500" width="208" height="120" rx="5" fill="none" stroke="#555"/>
<path d="M1727,911 H1745 M1727,916 H1745" stroke="#444"/>
<rect x="1861" y="790" width="16" height="16" fill="#8e8e8e"/>
<circle cx="1869" cy="823" r="8" fill="#eee" stroke="#111"/>
<path d="M1869,840 l8,4 v9 l-8,4 l-8,-4 v-9 Z" fill="#8c8c8c"/>
<path d="M1860,866 Q1869,872 1878,866 L1872,874 L1871,882 H1867 L1866,874 Z" fill="#aaa"/>
<path d="M1862,906 Q1862,896 1868,891 M1868,906 Q1869,900 1875,896 M1874,906 Q1875,903 1878,902" stroke="#888" fill="none" stroke-width="2"/>
<circle cx="1866" cy="926" r="5" fill="#aaa"/><circle cx="1874" cy="918" r="4" fill="#6a7f9c"/><circle cx="1864" cy="916" r="2.5" fill="#8a9a4a"/>
<g stroke="#2b2b2b"><path d="M1852,811H1887M1852,836H1887M1852,860H1887M1852,885H1887M1852,910H1887"/></g>
<!-- bottom header -->
<path d="M30,1017 l9,3 v11 l-9,4 l-9,-4 v-11 Z" fill="#ddd"/><path d="M30,1023 l9,-3 v11 l-9,4 Z" fill="#777"/><use href="#ud" x="43" y="1025"/>
<use href="#cube" x="310" y="1025"/><use href="#ud" x="430" y="1025"/>
<circle cx="459" cy="1025" r="8" fill="#eee"/><use href="#ud" x="476" y="1025"/>
<circle cx="502" cy="1021" r="5" fill="#ddd"/><circle cx="509" cy="1030" r="5" fill="#ddd"/><rect x="503" y="1024" width="6" height="6" fill="#4a7ac0"/><use href="#ud" x="522" y="1025"/>
<path d="M533,1027 H551 M533,1027 l4,-3 M533,1027 l4,3 M551,1027 l-4,-3 M551,1027 l-4,3" stroke="#fff" fill="none"/><g fill="#4a6ea8"><circle cx="537" cy="1018" r="2"/><circle cx="542" cy="1018" r="2"/><circle cx="547" cy="1018" r="2"/></g>
<path d="M574,1027 V1015" stroke="#4a7ac0" stroke-width="2"/><path d="M574,1027 L565,1033" stroke="#c03030" stroke-width="2"/><path d="M574,1027 L583,1033" stroke="#50b040" stroke-width="2"/>
<path d="M591,1033 L604,1019 M597,1018 H605 V1027" stroke="#cfe0f4" stroke-width="2" fill="none"/>
<path d="M617,1033 Q617,1020 630,1017" stroke="#5a7ea8" stroke-width="3" fill="none"/>
<path d="M641,1033 L647,1024 L654,1017" stroke="#5a7ea8" stroke-width="4" fill="none"/>
<path d="M586,1013V1036M610,1013V1036M635,1013V1036M660,1013V1036" stroke="#222"/>
<use href="#ud" x="743" y="1025"/>
<g stroke="#4a4a4a"><path d="M757,1024.5H817M823,1024.5H883M769,1012V1037M781,1012V1037M793,1012V1037M805,1012V1037M835,1012V1037M847,1012V1037M859,1012V1037M871,1012V1037"/></g>
<rect x="757" y="1013" width="12" height="11" fill="#5a5048"/><circle cx="763" cy="1018.500" r="3" fill="#d07a30"/>
<rect x="893" y="1017" width="13" height="13" fill="#bbb"/><path d="M905,1023 v9" stroke="#111" stroke-width="2"/>
<circle cx="932" cy="1025" r="8" fill="none" stroke="#aaa" stroke-width="2"/><circle cx="932" cy="1025" r="3" fill="none" stroke="#aaa"/>
<path d="M957,1030 L970,1018 M960,1019 Q956,1024 962,1031 Q968,1034 972,1027" fill="none" stroke="#bbb" stroke-width="2"/>
<path d="M981,1024 H998 M984,1019 V1030 M990,1018 V1031 M995,1019 V1030" stroke="#cfe0f4"/><use href="#ud" x="1008" y="1025"/>
<circle cx="1026" cy="1020" r="4" fill="#4a7ac0" stroke="#eee"/><path d="M1018,1026 H1038 M1018,1032 H1038 M1025,1018 V1036 M1032,1018 V1036" stroke="#eee"/>
<rect x="1053" y="1020" width="14" height="11" fill="#999" stroke="#111"/><circle cx="1060" cy="1026" r="3" fill="#333"/><circle cx="1067" cy="1018" r="3" fill="#ffe880"/>
<rect x="1076" y="1022" width="16" height="10" fill="#ddd" stroke="#111"/><path d="M1075,1021 L1091,1016" stroke="#222" stroke-width="3"/>
<!-- area corners -->
<path d="M0,40 L10,55 M0,46 L6,55 M1910,24 L1920,36 M1914,24 L1920,30 M1612,56 L1620,66 M1908,56 L1920,68 M1621,420 L1636,439 M1621,426 L1631,439 M1904,440 L1920,456 M1621,1022 L1634,1040 M1621,1028 L1630,1040 M0,1024 L14,1040 M0,1030 L9,1040" stroke="#9a9a9a" stroke-width="1"/>
</svg>
</div></body></html>
